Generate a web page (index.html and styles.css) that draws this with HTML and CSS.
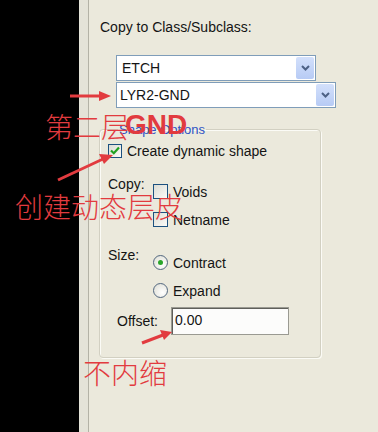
FILE: index.html
```html
<!DOCTYPE html>
<html lang="zh">
<head>
    <meta charset="UTF-8">
    <title>Copy to Class/Subclass</title>
    <link rel="stylesheet" href="styles.css">
</head>
<body>
    <div class="screen">
        <div class="gutter"></div>
        <div class="strip"></div>
        <div class="panel">
            <div class="caption">Copy to Class/Subclass:</div>

            <div class="combo combo-class">
                <span class="combo-text">ETCH</span>
                <span class="combo-btn">
                    <svg width="9" height="6" viewBox="0 0 9 6"><path d="M1 1 L4.5 4.5 L8 1" fill="none" stroke="#4d6185" stroke-width="2"/></svg>
                </span>
            </div>
            <div class="combo combo-sub">
                <span class="combo-text">LYR2-GND</span>
                <span class="combo-btn">
                    <svg width="9" height="6" viewBox="0 0 9 6"><path d="M1 1 L4.5 4.5 L8 1" fill="none" stroke="#4d6185" stroke-width="2"/></svg>
                </span>
            </div>

            <fieldset class="group">
                <legend>Shape Options</legend>

                <label class="check-row dynamic">
                    <span class="box checked">
                        <svg width="10" height="9" viewBox="0 0 10 9"><path d="M1 4.5 L3.8 7.2 L9 1.5" fill="none" stroke="#21a121" stroke-width="2.2"/></svg>
                    </span>
                    Create dynamic shape
                </label>

                <div class="option-block copy-block">
                    <div class="option-title">Copy:</div>
                    <div class="option-list">
                        <label class="check-row"><span class="box"></span>Voids</label>
                        <label class="check-row"><span class="box"></span>Netname</label>
                    </div>
                </div>

                <div class="option-block size-block">
                    <div class="option-title">Size:</div>
                    <div class="option-list">
                        <label class="check-row"><span class="radio on"><span class="dot"></span></span>Contract</label>
                        <label class="check-row"><span class="radio"></span>Expand</label>
                    </div>
                </div>

                <div class="offset-row">
                    <span class="offset-label">Offset:</span>
                    <span class="textbox">0.00</span>
                </div>
            </fieldset>
        </div>

        <!-- anotaciones en rojo encima de la captura -->
        <svg class="arrows" width="378" height="432" viewBox="0 0 378 432">
            <g stroke="#e23b3f" stroke-width="3" fill="#e23b3f">
                <line x1="70" y1="96" x2="100" y2="96"/>
                <polygon points="111,96 99,91 99,101" stroke="none"/>
                <line x1="58" y1="180" x2="103" y2="159"/>
                <polygon points="113,155 99,154 104,164" stroke="none"/>
                <line x1="142" y1="343" x2="163" y2="335"/>
                <polygon points="172,332 160,330 164,340" stroke="none"/>
            </g>
        </svg>
        <span class="note note-layer">第二层</span>
        <span class="note note-gnd">GND</span>
        <span class="note note-dynamic">创建动态层皮</span>
        <span class="note note-shrink">不内缩</span>
    </div>
</body>
</html>
```

FILE: styles.css
```css
body {
    margin: 0;
    background-color: #000;
    font-family: "Liberation Sans", Arial, sans-serif;
    font-size: 14px;
    color: #141414;
}
.screen {
    position: relative;
    display: flex;
    width: 378px;
    height: 432px;
    overflow: hidden;
}
.gutter {
    width: 79px;
    background-color: #000;
}
.strip {
    width: 9px;
    background-color: #e4e3d8;
    border-right: 1px solid #b3b2a6;
    box-shadow: 1px 0 0 #fbfbf6;
}
.panel {
    flex: 1;
    background-color: #ebe9dc;
    padding: 19px 0 0 10px;
}
.caption {
    line-height: 16px;
    margin-left: 1px;
}
.combo {
    display: flex;
    align-items: center;
    box-sizing: border-box;
    height: 26px;
    margin-left: 17px;
    background-color: #fff;
    border: 1px solid #7f9db9;
    padding: 1px;
}
.combo-class {
    width: 200px;
    margin-top: 20px;
}
.combo-sub {
    width: 220px;
    margin-top: 1px;
}
.combo-text {
    flex: 1;
    padding-left: 4px;
}
.combo-sub .combo-text {
    padding-left: 2px;
}
.combo-btn {
    display: flex;
    align-items: center;
    justify-content: center;
    width: 18px;
    height: 22px;
    background: linear-gradient(#d3e0fb, #b7cbf5);
    border-radius: 2px;
}
.group {
    box-sizing: border-box;
    width: 222px;
    height: 236px;
    margin: 14px 0 0 0;
    padding: 6px 0 0 8px;
    border: 1px solid #d2d0c2;
    border-radius: 4px;
    box-shadow: inset 1px 1px 0 #fbfbf6, 1px 1px 0 #fbfbf6;
}
.group legend {
    color: #2d52c4;
    font-size: 13px;
    padding: 0 1px;
    margin-left: 10px;
}
.check-row {
    display: flex;
    align-items: center;
    gap: 5px;
    height: 15px;
}
.box {
    display: flex;
    align-items: center;
    justify-content: center;
    box-sizing: border-box;
    width: 15px;
    height: 15px;
    border: 1px solid #1c5180;
    background: linear-gradient(135deg, #dcdcd4, #fbfbf8);
}
.box.checked {
    width: 14px;
    height: 14px;
}
.option-block {
    display: flex;
}
.option-title {
    width: 45px;
    line-height: 16px;
}
.option-list {
    display: flex;
    flex-direction: column;
}
.copy-block {
    margin-top: 18px;
}
.copy-block .option-list {
    padding-top: 8px;
    gap: 13px;
}
.size-block {
    margin-top: 20px;
}
.size-block .option-list {
    padding-top: 8px;
    gap: 13px;
}
.radio {
    display: flex;
    align-items: center;
    justify-content: center;
    box-sizing: border-box;
    width: 15px;
    height: 15px;
    border: 1px solid #52677f;
    border-radius: 50%;
    background: radial-gradient(circle at 65% 65%, #fff, #dcdcd2);
}
.radio .dot {
    width: 5px;
    height: 5px;
    border-radius: 50%;
    background-color: #2aa52a;
}
.offset-row {
    display: flex;
    align-items: center;
    margin-top: 9px;
    margin-left: 9px;
    gap: 13px;
}
.textbox {
    box-sizing: border-box;
    width: 118px;
    height: 28px;
    line-height: 24px;
    padding-left: 3px;
    background-color: #fcfcfb;
    border: 1px solid #9a9a92;
    box-shadow: inset 1px 1px 0 #5f5f5a;
}
.arrows {
    position: absolute;
    left: 0;
    top: 0;
}
.note {
    position: absolute;
    color: #e23b3f;
    font-family: "Noto Sans CJK SC", sans-serif;
    font-size: 28px;
    font-weight: 300;
    line-height: 28px;
}
.note-layer {
    left: 45px;
    top: 112px;
}
.note-gnd {
    left: 125px;
    top: 111px;
    font-family: "Liberation Sans", Arial, sans-serif;
    font-weight: bold;
}
.note-dynamic {
    left: 15px;
    top: 192px;
}
.note-shrink {
    left: 83px;
    top: 358px;
}
```
